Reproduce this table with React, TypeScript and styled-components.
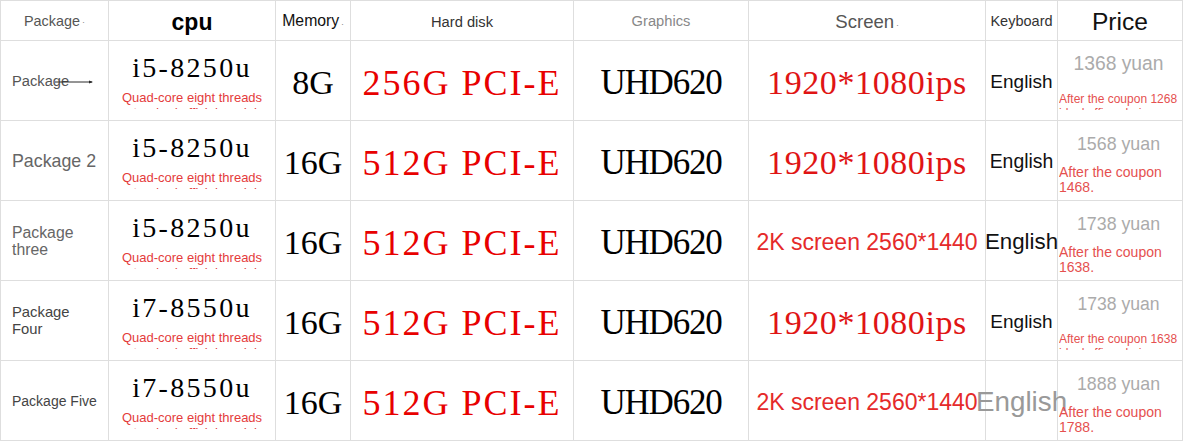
import React from "react";
import styled, { createGlobalStyle } from "styled-components";

const GlobalStyle = createGlobalStyle`
  html, body {
    margin: 0;
    padding: 0;
    background: #fff;
  }
  body {
    font-family: "Liberation Sans", Arial, sans-serif;
  }
`;

const Table = styled.div`
  display: grid;
  grid-template-columns: 108px 167px 75px 223px 175px 237px 72px 125px;
  grid-template-rows: 40px repeat(5, 80px);
  width: 1183px;
  border-top: 1px solid #dedede;
  border-left: 1px solid #dedede;
  box-sizing: border-box;
`;

const Cell = styled.div`
  box-sizing: border-box;
  border-right: 1px solid #dedede;
  border-bottom: 1px solid #dedede;
  display: flex;
  align-items: center;
  justify-content: center;
  min-width: 0;
  white-space: nowrap;
`;

const HeadCell = styled(Cell)<{ $size: number; $color: string; $bold?: boolean; $shift?: number }>`
  font-size: ${(p) => p.$size}px;
  color: ${(p) => p.$color};
  font-weight: ${(p) => (p.$bold ? 700 : 400)};
  padding-top: ${(p) => p.$shift || 0}px;
`;

const Dot = styled.span`
  font-size: 9px;
  color: #888;
  margin-left: 2px;
  margin-top: 2px;
`;

const PackageCell = styled(Cell)<{ $size: number; $color: string; $lh?: number }>`
  justify-content: flex-start;
  padding-left: 11px;
  font-size: ${(p) => p.$size}px;
  line-height: ${(p) => p.$lh || 20}px;
  color: ${(p) => p.$color};
  white-space: normal;
`;

const CpuCell = styled(Cell)`
  flex-direction: column;
  justify-content: flex-start;
  padding-top: 12px;
`;

const CpuModel = styled.div`
  font-family: "Liberation Serif", "Times New Roman", serif;
  font-size: 28px;
  line-height: 30px;
  letter-spacing: 2.3px;
  color: #000;
`;

const CpuNote = styled.div`
  margin-top: 7px;
  height: 19px;
  overflow: hidden;
  font-size: 13px;
  line-height: 15px;
  color: #e43b3b;
  text-align: center;
`;

const Spec = styled(Cell)<{ $size: number; $spacing: number; $color: string; $shift?: number }>`
  font-family: "Liberation Serif", "Times New Roman", serif;
  font-size: ${(p) => p.$size}px;
  letter-spacing: ${(p) => p.$spacing}px;
  color: ${(p) => p.$color};
  padding-top: ${(p) => p.$shift || 0}px;
`;

const ScreenSans = styled(Cell)`
  font-size: 23px;
  color: #e52a2a;
  padding-top: 3px;
`;

const KeyCell = styled(Cell)<{ $size: number; $color: string }>`
  font-size: ${(p) => p.$size}px;
  color: ${(p) => p.$color};
  padding-top: 2px;
`;

const PriceCell = styled(Cell)`
  flex-direction: column;
  align-items: stretch;
  justify-content: flex-start;
  padding: 13px 0 0 1px;
  white-space: normal;
`;

const PriceMain = styled.div<{ $size: number }>`
  font-size: ${(p) => p.$size}px;
  line-height: 20px;
  color: #ababab;
  text-align: center;
  padding-right: 4px;
`;

const Coupon = styled.div<{ $wrap: boolean }>`
  color: #e5504f;
  font-size: ${(p) => (p.$wrap ? 14 : 12)}px;
  line-height: ${(p) => (p.$wrap ? 15 : 14)}px;
  margin-top: ${(p) => (p.$wrap ? 11 : 18)}px;
  height: ${(p) => (p.$wrap ? 30 : 18)}px;
  overflow: hidden;
`;

const Arrow = () => (
  <svg width="40" height="8" viewBox="0 0 40 8" style={{ marginLeft: -14 }}>
    <line x1="0" y1="4" x2="37" y2="4" stroke="#2a2a2a" strokeWidth="1" />
    <path d="M34 2.5 L38 4 L34 5.5 Z" fill="#2a2a2a" />
  </svg>
);

type Row = {
  pkg: React.ReactNode;
  pkgSize: number;
  pkgColor: string;
  pkgLh?: number;
  cpu: string;
  mem: string;
  disk: string;
  screen: string;
  screenSerif: boolean;
  keySize: number;
  keyColor: string;
  price: string;
  priceSize: number;
  coupon: string;
  wrap: boolean;
};

const rows: Row[] = [
  {
    pkg: (
      <>
        Package
        <Arrow />
      </>
    ),
    pkgSize: 14.7,
    pkgColor: "#555",
    cpu: "i5-8250u",
    mem: "8G",
    disk: "256G PCI-E",
    screen: "1920*1080ips",
    screenSerif: true,
    keySize: 19,
    keyColor: "#111",
    price: "1368 yuan",
    priceSize: 19.3,
    coupon: "After the coupon 1268",
    wrap: false,
  },
  {
    pkg: "Package 2",
    pkgSize: 17.8,
    pkgColor: "#666",
    cpu: "i5-8250u",
    mem: "16G",
    disk: "512G PCI-E",
    screen: "1920*1080ips",
    screenSerif: true,
    keySize: 19.4,
    keyColor: "#111",
    price: "1568 yuan",
    priceSize: 17.8,
    coupon: "After the coupon 1468.",
    wrap: true,
  },
  {
    pkg: "Package three",
    pkgSize: 15.8,
    pkgColor: "#666",
    pkgLh: 17,
    cpu: "i5-8250u",
    mem: "16G",
    disk: "512G PCI-E",
    screen: "2K screen 2560*1440",
    screenSerif: false,
    keySize: 22.3,
    keyColor: "#111",
    price: "1738 yuan",
    priceSize: 17.8,
    coupon: "After the coupon 1638.",
    wrap: true,
  },
  {
    pkg: (
      <>
        Package
        <br />
        Four
      </>
    ),
    pkgSize: 14.8,
    pkgColor: "#444",
    pkgLh: 16.6,
    cpu: "i7-8550u",
    mem: "16G",
    disk: "512G PCI-E",
    screen: "1920*1080ips",
    screenSerif: true,
    keySize: 19,
    keyColor: "#111",
    price: "1738 yuan",
    priceSize: 17.6,
    coupon: "After the coupon 1638",
    wrap: false,
  },
  {
    pkg: "Package Five",
    pkgSize: 14,
    pkgColor: "#444",
    cpu: "i7-8550u",
    mem: "16G",
    disk: "512G PCI-E",
    screen: "2K screen 2560*1440",
    screenSerif: false,
    keySize: 27.8,
    keyColor: "#999",
    price: "1888 yuan",
    priceSize: 17.8,
    coupon: "After the coupon 1788.",
    wrap: true,
  },
];

export default function App() {
  return (
    <>
      <GlobalStyle />
      <Table>
        <HeadCell $size={14.4} $color="#555">
          Package<Dot>·</Dot>
        </HeadCell>
        <HeadCell $size={23} $color="#000" $bold $shift={4}>
          cpu
        </HeadCell>
        <HeadCell $size={15.8} $color="#111">
          Memory<Dot>.</Dot>
        </HeadCell>
        <HeadCell $size={14.7} $color="#333" $shift={3}>
          Hard disk
        </HeadCell>
        <HeadCell $size={14.7} $color="#888">
          Graphics
        </HeadCell>
        <HeadCell $size={18.6} $color="#555" $shift={2}>
          Screen<Dot>.</Dot>
        </HeadCell>
        <HeadCell $size={14.5} $color="#333">
          Keyboard
        </HeadCell>
        <HeadCell $size={24.6} $color="#111" $shift={3}>
          Price
        </HeadCell>

        {rows.map((r, i) => (
          <React.Fragment key={i}>
            <PackageCell $size={r.pkgSize} $color={r.pkgColor} $lh={r.pkgLh}>
              <span>{r.pkg}</span>
            </PackageCell>
            <CpuCell>
              <CpuModel>{r.cpu}</CpuModel>
              <CpuNote>
                Quad-core eight threads
                <br />
                standard official model
              </CpuNote>
            </CpuCell>
            <Spec $size={34} $spacing={0} $color="#000" $shift={4}>
              {r.mem}
            </Spec>
            <Spec $size={36} $spacing={2} $color="#e80000" $shift={4}>
              {r.disk}
            </Spec>
            <Spec $size={35} $spacing={-1.2} $color="#000" $shift={4}>
              UHD620
            </Spec>
            {r.screenSerif ? (
              <Spec $size={34} $spacing={0.6} $color="#e01414" $shift={5}>
                {r.screen}
              </Spec>
            ) : (
              <ScreenSans>{r.screen}</ScreenSans>
            )}
            <KeyCell $size={r.keySize} $color={r.keyColor}>
              English
            </KeyCell>
            <PriceCell>
              <PriceMain $size={r.priceSize}>{r.price}</PriceMain>
              <Coupon $wrap={r.wrap}>
                {r.coupon}
                {!r.wrap && (
                  <>
                    <br />
                    ideal office choice
                  </>
                )}
              </Coupon>
            </PriceCell>
          </React.Fragment>
        ))}
      </Table>
    </>
  );
}
